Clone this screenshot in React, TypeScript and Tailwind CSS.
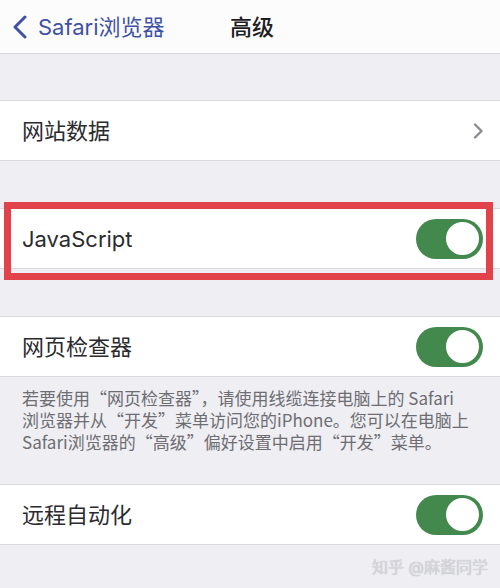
import React from "react";

const FONT = {
  fontFamily: 'Inter, "Noto Sans CJK SC", "Noto Sans", sans-serif',
};

const CJK_FIRST = {
  fontFamily: '"Noto Sans CJK SC", Inter, sans-serif',
};

function Toggle() {
  return (
    <div className="w-[67px] h-[40px] rounded-full bg-[#43894e] flex items-center justify-end pr-[2px]">
      <div className="w-[37px] h-[37px] rounded-full bg-white border-[2px] border-[#43894e]" />
    </div>
  );
}

function Row({ label, right }: { label: string; right: React.ReactNode }) {
  return (
    <div className="h-[61px] bg-white border-y border-[#d9d9de] flex items-center justify-between pl-[22px] pr-[17px]">
      <span className="text-[22px] text-[#2b2b2e] leading-none">{label}</span>
      {right}
    </div>
  );
}

function Chevron() {
  return (
    <svg width="10" height="16" viewBox="0 0 10 16" fill="none">
      <path d="M2 1.5 L8.5 8 L2 14.5" stroke="#8b8b90" strokeWidth="2.4" strokeLinecap="round" strokeLinejoin="round" />
    </svg>
  );
}

export default function App() {
  return (
    <div className="w-[500px] h-[588px] bg-[#eeeef3] overflow-hidden" style={FONT}>
      <div className="h-[54px] bg-[#fcfcfd] border-b border-[#d9d9de] relative flex items-center">
        <div className="flex items-center pl-[12px] gap-[10px]">
          <svg width="16" height="24" viewBox="0 0 16 24" fill="none">
            <path d="M13 2 L3 12 L13 22" stroke="#3f52a5" strokeWidth="3" strokeLinecap="round" strokeLinejoin="round" />
          </svg>
          <span className="text-[22px] text-[#3f52a5] leading-none">Safari浏览器</span>
        </div>
        <span className="absolute left-[230px] text-[22px] font-medium text-[#1d1d1f] leading-none">高级</span>
      </div>
      <div className="h-[46px]" />
      <Row label="网站数据" right={<Chevron />} />
      <div className="h-[47px]" />
      <div className="relative">
        <Row label="JavaScript" right={<Toggle />} />
        <div className="absolute left-[4px] top-[-6px] w-[489px] h-[78px] border-[7px] border-[#e2434b] pointer-events-none" />
      </div>
      <div className="h-[47px]" />
      <Row label="网页检查器" right={<Toggle />} />
      <div className="h-[107px] pt-[10px] pl-[22px] text-[17px] leading-[22px] text-[#6d6d72] whitespace-nowrap" style={CJK_FIRST}>
        <div>若要使用“网页检查器”，请使用线缆连接电脑上的 Safari</div>
        <div>浏览器并从“开发”菜单访问您的iPhone。您可以在电脑上</div>
        <div>Safari浏览器的“高级”偏好设置中启用“开发”菜单。</div>
      </div>
      <Row label="远程自动化" right={<Toggle />} />
      <div className="h-[43px] flex items-center justify-end pr-[12px]">
        <span className="text-[16px] text-[#d6d6dc] [text-shadow:0_0_1px_#b8b8be]">知乎 @麻酱同学</span>
      </div>
    </div>
  );
}
